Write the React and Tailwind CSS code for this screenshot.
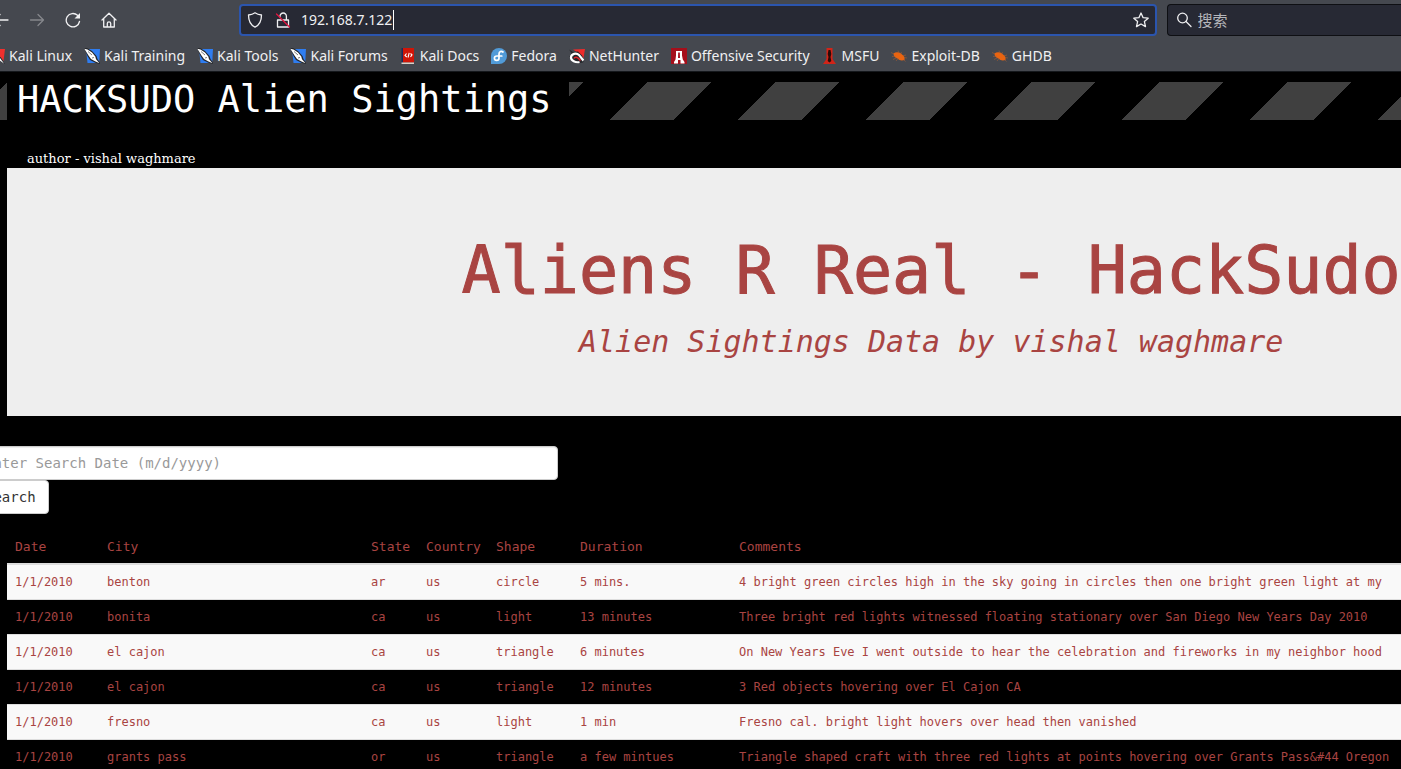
import React from "react";

const stroke = {
  fill: "none",
  stroke: "currentColor",
  strokeWidth: 1.3,
  strokeLinecap: "round",
  strokeLinejoin: "round",
};

function Icon({ children, className = "size-4" }) {
  return (
    <svg viewBox="0 0 16 16" className={"shrink-0 " + className} aria-hidden="true" {...stroke}>
      {children}
    </svg>
  );
}

const KaliBlue = () => (
  <svg viewBox="0 0 16 16" className="size-4 shrink-0" aria-hidden="true">
    <path d="M2 1H16l-.8 14H3.500z" fill="#2f7df0" />
    <path d="M0 0h3l5 3 4.500 5 1 3L16 14.500V16l-4-1-6-3-2.500-4z" fill="#25272b" />
    <path d="M.3.800 3.500 1.500l4.500 3 3.300 4 .700 2.700 3.500 4-4.500-2-4-2.200-2.500-3.500z" fill="#fff" />
    <path d="M4 3.500l4 3.500M8 10l2-.5" stroke="#25272b" strokeWidth=".6" />
  </svg>
);

const KaliRed = () => (
  <svg viewBox="0 0 16 16" className="size-4 shrink-0" aria-hidden="true">
    <path d="M1 1h15l-1.500 12-3-4L6 5z" fill="#f0302e" />
    <path d="M6 6l5 2.500 5 7.500-7-4z" fill="#25272b" />
    <path d="M6 7l5 3 4 5.500-6-4z" fill="#fff" />
  </svg>
);

const Docs = () => (
  <svg viewBox="0 0 16 16" className="size-4 shrink-0" aria-hidden="true">
    <path d="M1.500 0h2v14.500h-2z" fill="#1c2a5c" />
    <path d="M3 0h11v14.500H3z" fill="#d01507" />
    <path d="M1.500 14.500H14V16H1.500z" fill="#d8d2c8" />
    <path d="M6.500 5.500 5 7.500l1.800 1.500M9.200 4.800 8 9.500M10.500 5.500l1.500 1.300-1.500 2" fill="none" stroke="#fff" strokeWidth="1.1" />
  </svg>
);

const Fedora = () => (
  <svg viewBox="0 0 16 16" className="size-4 shrink-0" aria-hidden="true">
    <path d="M8 0a8 8 0 1 1 0 16H0V8a8 8 0 0 1 8-8z" fill="#519bd8" />
    <path d="M12 4c-1.600-1.400-4-.400-4 2v4.200c0 2.800-4.600 2.800-4.600 0C3.400 8.500 5 8 6 8h4.800" fill="none" stroke="#fff" strokeWidth="1.7" strokeLinecap="round" />
  </svg>
);

const NetHunter = () => (
  <svg viewBox="0 0 16 16" className="size-4 shrink-0" aria-hidden="true">
    <path d="M4 1.500 16 1l-1.500 9L9 5z" fill="#ee2b2b" />
    <path d="M0 1.500l4 2.500 5-.5 4 4 2 5-1 2-6 1L2 12 .5 8.500 2.500 5z" fill="#25272b" />
    <path d="M10.500 14c-4 1-8.500-1.500-8.500-4.500C2 5.500 7.500 4.500 10 7c1.500 1.500 2.500 4 4.500 5.500" fill="none" stroke="#fff" strokeWidth="2.200" />
    <path d="M5 10.500C6 8.500 8 9 9.500 10.500l2 2" fill="none" stroke="#e8242a" strokeWidth="1.500" />
  </svg>
);

const Offsec = () => (
  <svg viewBox="0 0 16 16" className="size-4 shrink-0" aria-hidden="true">
    <path d="M0 0h16v16H0z" fill="#a50f1b" />
    <path d="M5 3h6v4.500l.800 4L13.500 14v1.500h-4V12h-2.500v3.500h-4V14l1.500-2.500.5-4z" fill="#fff" />
    <path d="M7.200 4.500h1.600L9 10H7z" fill="#a50f1b" />
  </svg>
);

const Msfu = () => (
  <svg viewBox="0 0 16 16" className="size-4 shrink-0" aria-hidden="true">
    <path d="M4.500 0h6v11l3.500 5H1l3.500-5z" fill="#d22418" />
    <path d="M6.500 2h2l.800 4-.800 3 .800 4-1.800 1.500-1.800-1.500.800-4-.800-3z" fill="#2a0b08" />
  </svg>
);

const Bug = () => (
  <svg viewBox="0 0 16 16" className="size-4 shrink-0" aria-hidden="true">
    <path d="M2.500 5.500C5 3.500 9 4 11 6.500c2 1 3 3 2.500 5.500-2.500 1-5.500.500-7-1.500-2.500-.500-4-2.500-4-5z" fill="#ea6410" />
    <path d="M1 8.500l4-.500M2 11.500l4-2M5 13l2.500-3M0 4.500l3 1.500M7 2.500l1 3M10.500 4l-1 2.500M15 7l-3.500 1M16 10l-3-.500M14.500 13.500l-2-2" fill="none" stroke="#b8602c" strokeWidth=".5" />
  </svg>
);

const bookmarks = [
  ["Kali Linux", KaliRed],
  ["Kali Training", KaliBlue],
  ["Kali Tools", KaliBlue],
  ["Kali Forums", KaliBlue],
  ["Kali Docs", Docs],
  ["Fedora", Fedora],
  ["NetHunter", NetHunter],
  ["Offensive Security", Offsec],
  ["MSFU", Msfu],
  ["Exploit-DB", Bug],
  ["GHDB", Bug],
];

function BrowserBar() {
  return (
    <header className="border-b border-[#15181c] bg-[#45484f] font-['Noto_Sans','Noto_Sans_CJK_SC',sans-serif] text-[#f0f0f2]">
      <div className="flex h-10 items-center">
        <nav aria-label="Navigation" className="-ml-[7px] flex w-[246px] shrink-0 items-center gap-5">
          <button type="button" aria-label="Back" className="size-4">
            <Icon><path d="M15 8H1.500M7 2.500 1.500 8 7 13.500" /></Icon>
          </button>
          <button type="button" aria-label="Forward" disabled className="size-4 text-[#85878c]">
            <Icon><path d="M1.500 8h13M9 2.500 14.500 8 9 13.500" /></Icon>
          </button>
          <button type="button" aria-label="Reload" className="size-4">
            <Icon>
              <path d="M14.500 9.500A6.700 6.700 0 1 1 12.500 3.300" />
              <path d="M15 1v5.500H9.500z" fill="currentColor" stroke="none" />
            </Icon>
          </button>
          <button type="button" aria-label="Home" className="size-4">
            <Icon>
              <path d="M1 8 8 1.200 15 8M2.700 6.500v8.500h10.600V6.500M6.300 15v-3.500a1.700 1.700 0 0 1 3.400 0V15" />
            </Icon>
          </button>
        </nav>
        <div className="flex h-8 min-w-0 flex-4 items-center rounded border-2 border-[#2b55ae] bg-[#272934] px-1.5">
          <Icon><path d="M8 .800c2 1.500 4 2 6.500 2.200C14.500 9 12.500 13 8 15.200 3.500 13 1.500 9 1.500 3 4 2.800 6 2.300 8 .800z" /></Icon>
          <Icon className="ml-3 size-4">
            <path d="M2.500 8h11v7h-11zM5 5V4.200a3.200 3.200 0 0 1 6.400 0V8" />
            <path d="M1.500 2 14.500 15" stroke="#e2143f" />
          </Icon>
          <input
            aria-label="Address"
            defaultValue="192.168.7.122"
            className="ml-2.5 h-5 w-[93px] border-r border-white bg-transparent text-sm outline-none"
          />
          <button type="button" aria-label="Bookmark this page" className="ml-auto size-4">
            <Icon><path d="m8 1 2.100 4.700 5.100.500-3.800 3.400 1.100 5L8 12l-4.500 2.600 1.100-5L.800 6.200l5.100-.500z" /></Icon>
          </button>
        </div>
        <label className="ml-2.5 flex h-8 min-w-0 flex-1 items-center gap-1.5 rounded-l border border-r-0 border-[#0e0f13] bg-[#272934] pl-2">
          <Icon>
            <circle cx="6.500" cy="6" r="4.800" />
            <path d="m10 9.500 5 5" />
          </Icon>
          <input
            aria-label="Search"
            placeholder="搜索"
            className="min-w-0 flex-1 bg-transparent text-[15px] outline-none placeholder:text-[#b5b6bb]"
          />
        </label>
      </div>
      <nav aria-label="Bookmarks" className="-ml-[11px] flex h-[31px] items-center gap-3 text-sm whitespace-nowrap">
        {bookmarks.map(([label, Mark]) => (
          <a key={label} href="#" className="flex items-center gap-1">
            <Mark />
            {label}
          </a>
        ))}
      </nav>
    </header>
  );
}

const columns = ["Date", "City", "State", "Country", "Shape", "Duration", "Comments"];

const sightings = [
  ["1/1/2010", "benton", "ar", "us", "circle", "5 mins.", "4 bright green circles high in the sky going in circles then one bright green light at my"],
  ["1/1/2010", "bonita", "ca", "us", "light", "13 minutes", "Three bright red lights witnessed floating stationary over San Diego New Years Day 2010"],
  ["1/1/2010", "el cajon", "ca", "us", "triangle", "6 minutes", "On New Years Eve I went outside to hear the celebration and fireworks in my neighbor hood"],
  ["1/1/2010", "el cajon", "ca", "us", "triangle", "12 minutes", "3 Red objects hovering over El Cajon CA"],
  ["1/1/2010", "fresno", "ca", "us", "light", "1 min", "Fresno cal. bright light hovers over head then vanished"],
  ["1/1/2010", "grants pass", "or", "us", "triangle", "a few mintues", "Triangle shaped craft with three red lights at points hovering over Grants Pass&#44 Oregon"],
];

function SightingsTable() {
  return (
    <table className="w-full table-fixed border-collapse text-left leading-[18px] whitespace-nowrap">
      <colgroup>
        <col className="w-[92px]" />
        <col className="w-[264px]" />
        <col className="w-[55px]" />
        <col className="w-[70px]" />
        <col className="w-[84px]" />
        <col className="w-[159px]" />
        <col />
      </colgroup>
      <thead className="text-[13px]">
        <tr className="border-b-2 border-[#dddddd]">
          {columns.map((c) => (
            <th key={c} scope="col" className="px-2 pt-2 pb-[7px] font-normal">{c}</th>
          ))}
        </tr>
      </thead>
      <tbody className="text-xs leading-[18px]">
        {sightings.map((row, i) => (
          <tr key={i} className="border-b border-[#dddddd] odd:bg-[#f9f9f9]">
            {row.map((cell, j) => (
              <td key={j} className="p-2">{cell}</td>
            ))}
          </tr>
        ))}
      </tbody>
    </table>
  );
}

export default function App() {
  return (
    <div className="h-screen overflow-hidden bg-black font-['DejaVu_Sans_Mono',monospace] text-[#a94442]">
      <BrowserBar />
      <div className="w-[calc(132%+6px)] pt-2.5">
        <div className="bg-[linear-gradient(135deg,#404040_25%,transparent_25%,transparent_50%,#404040_50%,#404040_75%,transparent_75%)] bg-[length:128px_128px] bg-[position:7px_0] pl-[7px]">
          <h1 className="w-[562px] bg-black px-2.5 pb-0.5 text-[37px] leading-9 whitespace-nowrap text-white">
            HACKSUDO Alien Sightings
          </h1>
        </div>
        <p className="mt-[30px] ml-[27px] font-['DejaVu_Serif',serif] text-[13px] leading-[18px] text-white">
          author - vishal waghmare
        </p>
        <main className="pl-[7px]">
          <section className="bg-[#eeeeee] pt-[67px] pb-[54px] text-center">
            <h2 className="text-[65px] leading-[72px] [-webkit-text-stroke:1px]">Aliens R Real - HackSudo</h2>
            <p className="mt-[15px] text-[30px] leading-10 italic">Alien Sightings Data by vishal waghmare</p>
          </section>
          <form className="mt-[30px] -ml-[35px] flex flex-col items-start text-sm" onSubmit={(e) => e.preventDefault()}>
            <input
              aria-label="Search date"
              placeholder="Enter Search Date (m/d/yyyy)"
              className="h-[34px] w-[586px] rounded border border-[#cccccc] bg-white px-3 text-[#555555] shadow-[inset_0_1px_1px_rgba(0,0,0,0.075)] placeholder:text-[#999999]"
            />
            <button type="submit" className="h-[34px] rounded border border-[#cccccc] bg-white px-3 text-[#333333]">
              Search
            </button>
          </form>
          <div className="mt-4">
            <SightingsTable />
          </div>
        </main>
      </div>
    </div>
  );
}
